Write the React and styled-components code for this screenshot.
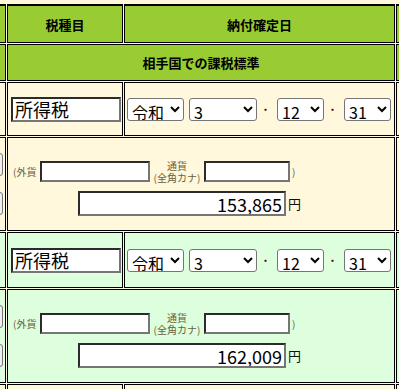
import styled, { createGlobalStyle } from 'styled-components';

const HEAD = '#99cc33';
const CREAM = '#fff8dc';
const MINT = '#ddffdd';
const JP = '"Noto Sans CJK JP", "Noto Sans", sans-serif';

const GlobalStyle = createGlobalStyle`
  html, body {
    margin: 0;
    padding: 0;
    overflow: hidden;
    background: ${CREAM};
  }
  body {
    font-family: ${JP};
    color: #000;
  }
`;

const FormTable = styled.table`
  width: max-content;
  border-collapse: separate;
  border-spacing: 1px;
  margin: 3px 0 0 -45px;
`;

const HeadCell = styled.th`
  border: 1px solid #000;
  border-top-width: 2px;
  background: ${HEAD};
  padding: 0;
  height: 36px;
  width: ${(p) => p.$w}px;
  min-width: ${(p) => p.$w}px;
  font-size: 13px;
  font-weight: bold;
  text-align: center;
  vertical-align: middle;
`;

const Cell = styled.td`
  border: 1px solid #000;
  padding: 0;
  background: ${(p) => p.$bg};
  height: ${(p) => p.$h}px;
  vertical-align: ${(p) => (p.$top ? 'top' : 'middle')};
`;

const Banner = styled.div`
  text-align: center;
  font-size: 13px;
  font-weight: bold;
`;

const BoxInput = styled.input`
  box-sizing: border-box;
  display: block;
  margin: 0;
  padding: 0 2px;
  width: ${(p) => p.$w}px;
  height: ${(p) => p.$h}px;
  border: 2px solid;
  border-color: #2b2b2b #767676 #767676 #2b2b2b;
  background: #fff;
  color: #000;
  font-family: ${JP};
  font-size: ${(p) => p.$fs || 13}px;
  text-align: ${(p) => (p.$right ? 'right' : 'left')};
  outline: none;
`;

const TaxWrap = styled.div`
  padding-left: 3px;
`;

const DateRow = styled.div`
  display: flex;
  align-items: center;
  padding-left: 2px;
`;

const DateSelect = styled.select`
  box-sizing: border-box;
  width: ${(p) => p.$w}px;
  height: 23px;
  margin: 0 ${(p) => p.$gap || 0}px 0 0;
  border: 1px solid #767676;
  border-radius: 3px;
  font-family: ${JP};
  font-size: 16px;
  color: #000;
  background-color: #fff;
`;

const Dot = styled.span`
  box-sizing: border-box;
  width: 20px;
  padding-right: 3px;
  text-align: center;
  font-size: 11px;
  color: #600;
`;

const SideButtons = styled.div`
  display: flex;
  flex-direction: column;
  align-items: flex-end;
  gap: 16px;
  padding: 15px 2px 0 0;
`;

const SideButton = styled.button`
  width: 40px;
  height: 23px;
  margin: 0;
  border: 1px solid #767676;
  border-radius: 3px;
  background: #efefef;
`;

const Amounts = styled.div`
  padding-top: 22px;
`;

const ForeignLine = styled.div`
  display: flex;
  align-items: center;
  height: 23px;
  padding-left: 5px;
`;

const Small = styled.span`
  font-size: 10px;
  line-height: 12px;
  color: #6e5c40;
  width: ${(p) => (p.$w ? `${p.$w}px` : 'auto')};
  margin-left: ${(p) => p.$ml || 0}px;
`;

const Stack = styled.div`
  display: flex;
  flex-direction: column;
  align-items: center;
  width: 54px;
  font-size: 10px;
  line-height: 12px;
  color: #6e5c40;
`;

const YenLine = styled.div`
  display: flex;
  align-items: center;
  margin-top: 8px;
  padding-left: 70px;
`;

const Yen = styled.span`
  margin-left: 2px;
  font-size: 13px;
  color: #111;
`;

function TaxRow({ bg, h }) {
  return (
    <tr>
      <Cell $bg={bg} $h={h} />
      <Cell $bg={bg} $h={h}>
        <TaxWrap>
          <BoxInput $w={110} $h={25} $fs={18} defaultValue="所得税" />
        </TaxWrap>
      </Cell>
      <Cell $bg={bg} $h={h}>
        <DateRow>
          <DateSelect $w={57} $gap={5} defaultValue="令和">
            <option>令和</option>
          </DateSelect>
          <DateSelect $w={68} defaultValue="3">
            <option>3</option>
          </DateSelect>
          <Dot>・</Dot>
          <DateSelect $w={47} defaultValue="12">
            <option>12</option>
          </DateSelect>
          <Dot>・</Dot>
          <DateSelect $w={47} defaultValue="31">
            <option>31</option>
          </DateSelect>
        </DateRow>
      </Cell>
      <Cell $bg={bg} $h={h} />
    </tr>
  );
}

function AmountRow({ bg, amount }) {
  return (
    <tr>
      <Cell $bg={bg} $h={92} $top>
        <SideButtons>
          <SideButton type="button" />
          <SideButton type="button" />
        </SideButtons>
      </Cell>
      <Cell $bg={bg} $h={92} $top colSpan={2}>
        <Amounts>
          <ForeignLine>
            <Small $w={27}>(外貨</Small>
            <BoxInput $w={110} $h={21} />
            <Stack>
              <span>通貨</span>
              <span>(全角カナ)</span>
            </Stack>
            <BoxInput $w={86} $h={21} />
            <Small $ml={2}>)</Small>
          </ForeignLine>
          <YenLine>
            <BoxInput $w={208} $h={25} $fs={18} $right defaultValue={amount} />
            <Yen>円</Yen>
          </YenLine>
        </Amounts>
      </Cell>
      <Cell $bg={bg} $h={92} />
    </tr>
  );
}

export default function App() {
  return (
    <>
      <GlobalStyle />
      <FormTable>
        <thead>
          <tr>
            <HeadCell $w={48} />
            <HeadCell $w={114}>税種目</HeadCell>
            <HeadCell $w={269}>納付確定日</HeadCell>
            <HeadCell $w={60} />
          </tr>
        </thead>
        <tbody>
          <tr>
            <Cell $bg={HEAD} $h={35} />
            <Cell $bg={HEAD} $h={35} colSpan={2}>
              <Banner>相手国での課税標準</Banner>
            </Cell>
            <Cell $bg={HEAD} $h={35} />
          </tr>
          <TaxRow bg={CREAM} h={52} />
          <AmountRow bg={CREAM} amount="153,865" />
          <TaxRow bg={MINT} h={54} />
          <AmountRow bg={MINT} amount="162,009" />
          <tr>
            <Cell $bg={CREAM} $h={40} />
            <Cell $bg={CREAM} $h={40} />
            <Cell $bg={CREAM} $h={40} />
            <Cell $bg={CREAM} $h={40} />
          </tr>
        </tbody>
      </FormTable>
    </>
  );
}
